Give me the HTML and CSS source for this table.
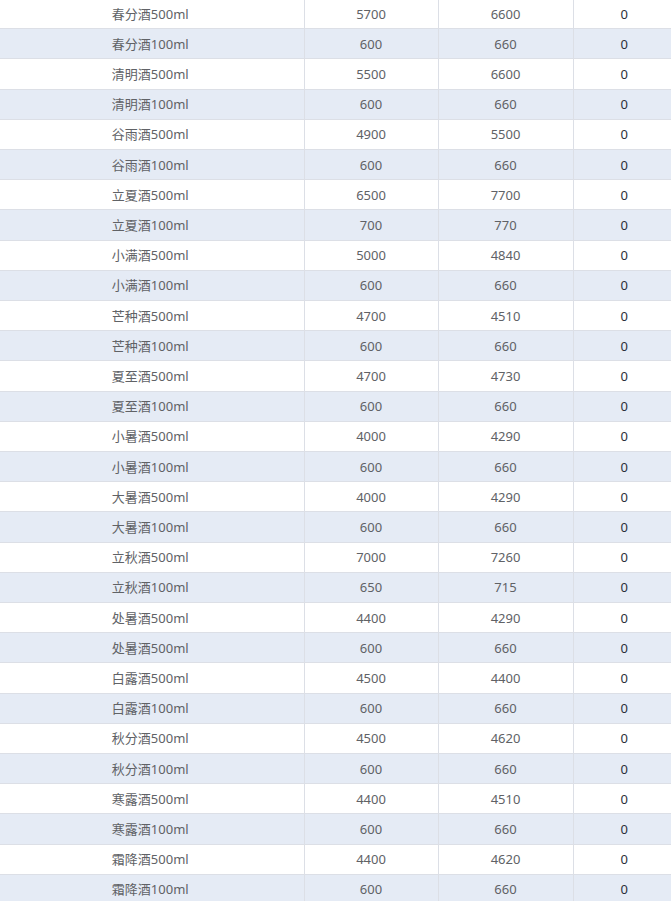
FILE: index.html
```html
<!DOCTYPE html>
<html lang="zh-CN">
<head>
<meta charset="utf-8">
<title>节气酒价格表</title>
<link rel="stylesheet" href="styles.css">
</head>
<body>
<div class="viewport">
<table class="price-table">
<colgroup>
<col class="c-name"><col class="c-num"><col class="c-num2"><col class="c-zero">
</colgroup>
<tbody>
<tr><td>春分酒500ml</td><td>5700</td><td>6600</td><td class="z">0</td></tr>
<tr><td>春分酒100ml</td><td>600</td><td>660</td><td class="z">0</td></tr>
<tr><td>清明酒500ml</td><td>5500</td><td>6600</td><td class="z">0</td></tr>
<tr><td>清明酒100ml</td><td>600</td><td>660</td><td class="z">0</td></tr>
<tr><td>谷雨酒500ml</td><td>4900</td><td>5500</td><td class="z">0</td></tr>
<tr><td>谷雨酒100ml</td><td>600</td><td>660</td><td class="z">0</td></tr>
<tr><td>立夏酒500ml</td><td>6500</td><td>7700</td><td class="z">0</td></tr>
<tr><td>立夏酒100ml</td><td>700</td><td>770</td><td class="z">0</td></tr>
<tr><td>小满酒500ml</td><td>5000</td><td>4840</td><td class="z">0</td></tr>
<tr><td>小满酒100ml</td><td>600</td><td>660</td><td class="z">0</td></tr>
<tr><td>芒种酒500ml</td><td>4700</td><td>4510</td><td class="z">0</td></tr>
<tr><td>芒种酒100ml</td><td>600</td><td>660</td><td class="z">0</td></tr>
<tr><td>夏至酒500ml</td><td>4700</td><td>4730</td><td class="z">0</td></tr>
<tr><td>夏至酒100ml</td><td>600</td><td>660</td><td class="z">0</td></tr>
<tr><td>小暑酒500ml</td><td>4000</td><td>4290</td><td class="z">0</td></tr>
<tr><td>小暑酒100ml</td><td>600</td><td>660</td><td class="z">0</td></tr>
<tr><td>大暑酒500ml</td><td>4000</td><td>4290</td><td class="z">0</td></tr>
<tr><td>大暑酒100ml</td><td>600</td><td>660</td><td class="z">0</td></tr>
<tr><td>立秋酒500ml</td><td>7000</td><td>7260</td><td class="z">0</td></tr>
<tr><td>立秋酒100ml</td><td>650</td><td>715</td><td class="z">0</td></tr>
<tr><td>处暑酒500ml</td><td>4400</td><td>4290</td><td class="z">0</td></tr>
<tr><td>处暑酒500ml</td><td>600</td><td>660</td><td class="z">0</td></tr>
<tr><td>白露酒500ml</td><td>4500</td><td>4400</td><td class="z">0</td></tr>
<tr><td>白露酒100ml</td><td>600</td><td>660</td><td class="z">0</td></tr>
<tr><td>秋分酒500ml</td><td>4500</td><td>4620</td><td class="z">0</td></tr>
<tr><td>秋分酒100ml</td><td>600</td><td>660</td><td class="z">0</td></tr>
<tr><td>寒露酒500ml</td><td>4400</td><td>4510</td><td class="z">0</td></tr>
<tr><td>寒露酒100ml</td><td>600</td><td>660</td><td class="z">0</td></tr>
<tr><td>霜降酒500ml</td><td>4400</td><td>4620</td><td class="z">0</td></tr>
<tr><td>霜降酒100ml</td><td>600</td><td>660</td><td class="z">0</td></tr>
</tbody>
</table>
</div>
</body>
</html>
```
FILE: styles.css
```css
html, body {
  margin: 0;
  padding: 0;
  background: #ffffff;
  overflow: hidden;
}
.viewport {
  width: 671px;
  height: 901px;
  overflow: hidden;
}
.price-table {
  margin: -2px 0 0 -3px;
  width: 678px;
  border-collapse: collapse;
  table-layout: fixed;
  font-family: "Noto Sans", "Noto Sans CJK SC", sans-serif;
  font-size: 13px;
  color: #606266;
}
.c-name { width: 307px; }
.c-num { width: 134px; }
.c-num2 { width: 135px; }
.c-zero { width: 102px; }
.price-table tr {
  height: 30.21px;
}
.price-table tr:nth-child(even) td {
  background: #e5ebf5;
}
.price-table td {
  padding: 0;
  text-align: center;
  border-top: 1px solid #dcdfe6;
  border-bottom: 1px solid #dcdfe6;
  border-right: 1px solid #dcdfe6;
  line-height: 18px;
}
.price-table td.z {
  color: #2b2f3a;
  border-right: none;
}
```
